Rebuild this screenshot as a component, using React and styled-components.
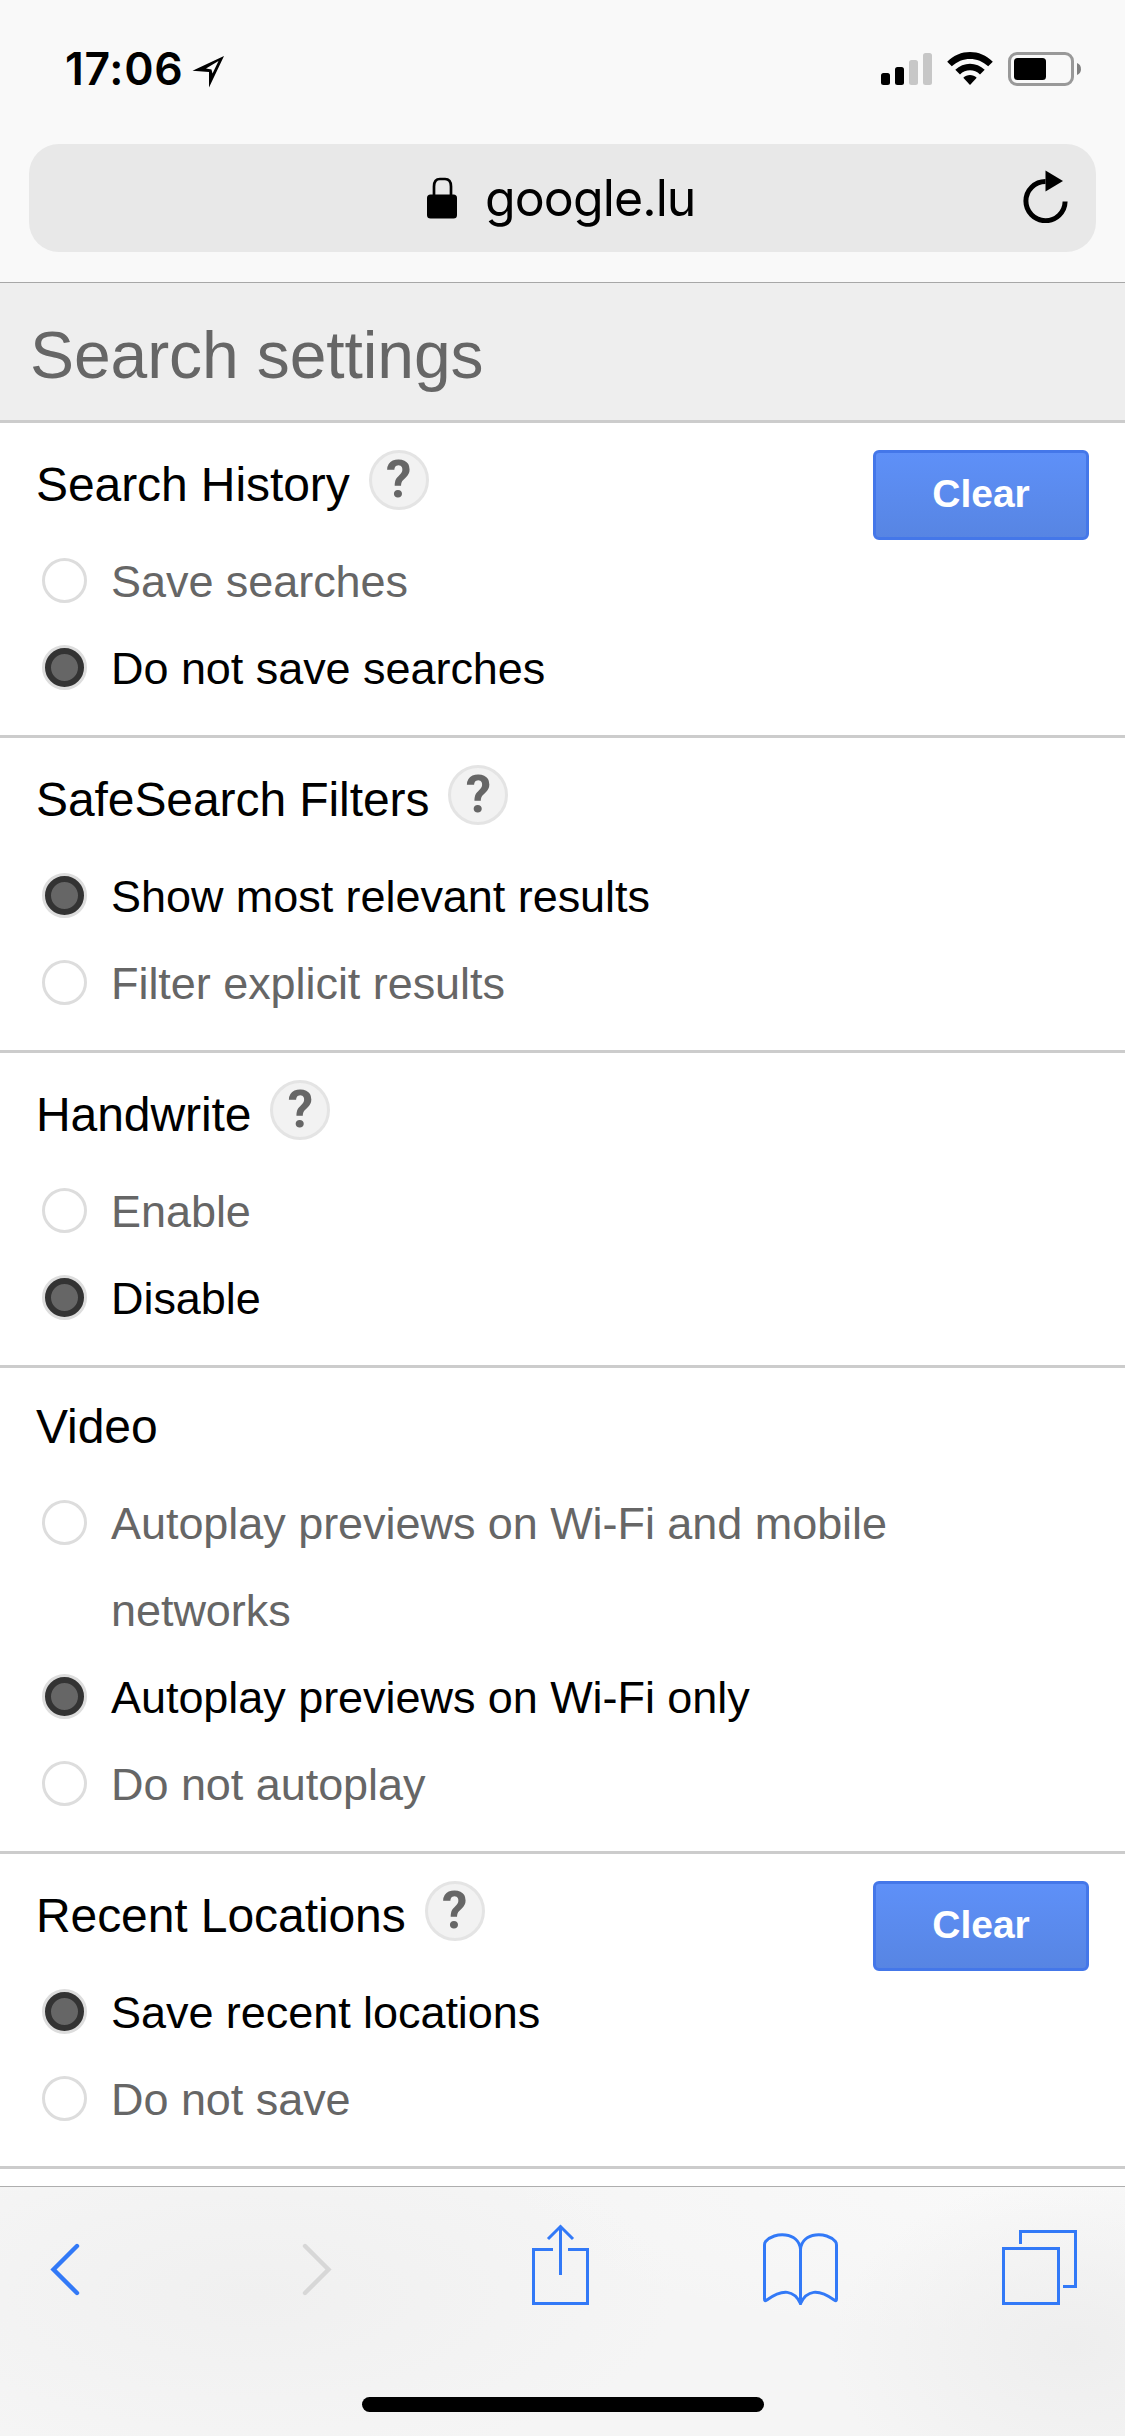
import { useState } from 'react';
import styled, { createGlobalStyle } from 'styled-components';

const SECTIONS = [
  {
    title: 'Search History',
    help: true,
    clearable: true,
    selected: 1,
    options: ['Save searches', 'Do not save searches'],
  },
  {
    title: 'SafeSearch Filters',
    help: true,
    selected: 0,
    options: ['Show most relevant results', 'Filter explicit results'],
  },
  {
    title: 'Handwrite',
    help: true,
    selected: 1,
    options: ['Enable', 'Disable'],
  },
  {
    title: 'Video',
    selected: 1,
    options: [
      'Autoplay previews on Wi-Fi and mobile networks',
      'Autoplay previews on Wi-Fi only',
      'Do not autoplay',
    ],
  },
  {
    title: 'Recent Locations',
    help: true,
    clearable: true,
    selected: 0,
    options: ['Save recent locations', 'Do not save'],
  },
];

const SettingsSection = ({ title, help, clearable, selected, options }) => {
  const [value, setValue] = useState(selected);

  return (
    <Section>
      <SectionBody>
        <Heading $help={help}>
          <Title>{title}</Title>
          {help && <Help>?</Help>}
        </Heading>
        {options.map((label, i) => (
          <Option key={label} $checked={i === value} onClick={() => setValue(i)}>
            <Radio $checked={i === value} />
            <Label>{label}</Label>
          </Option>
        ))}
      </SectionBody>
      {clearable && <ClearButton type='button'>Clear</ClearButton>}
    </Section>
  );
};

const App = () => (
  <Screen>
    <GlobalStyle />
    <StatusBar>
      <Clock>17:06</Clock>
      <LocationIcon />
      <StatusIcons>
        <SignalIcon />
        <WifiIcon />
        <BatteryIcon />
      </StatusIcons>
    </StatusBar>

    <AddressBar>
      <AddressField>
        <LockIcon />
        <Host>google.lu</Host>
        <ReloadIcon />
      </AddressField>
    </AddressBar>

    <Page>
      <PageHeader>Search settings</PageHeader>
      {SECTIONS.map((section) => (
        <SettingsSection key={section.title} {...section} />
      ))}
    </Page>

    <Toolbar>
      <Actions>
        <ChevronIcon color='#3279f7' d='M27 3 3.5 26.5 27 50' />
        <ChevronIcon color='#d7d7d7' d='M3 3 26.5 26.5 3 50' />
        <ShareIcon />
        <BookIcon />
        <TabsIcon />
      </Actions>
      <HomeIndicator />
    </Toolbar>
  </Screen>
);

const LocationIcon = () => (
  <svg width='33' height='33' viewBox='0 0 33 33'>
    <path
      fillRule='evenodd'
      d='M32 1 .5 15.7 17 17v15.5L32 1ZM26.5 6 20.5 18.5 19.5 14.5 14 13.5Z'
    />
  </svg>
);

const SignalIcon = () => (
  <svg width='51' height='34' viewBox='0 0 51 34'>
    <rect x='0' y='21' width='9' height='12' rx='2.5' />
    <rect x='14' y='15' width='9' height='18' rx='2.5' />
    <rect x='28' y='8' width='9' height='25' rx='2.5' fill='#c7c7c7' />
    <rect x='42' y='1' width='9' height='32' rx='2.5' fill='#c7c7c7' />
  </svg>
);

const WifiIcon = () => (
  <svg width='46' height='34' viewBox='0 0 46 34'>
    <path d='M0.2 9.7C13-3.2 33-3.2 45.8 9.7L41.2 14.3C31 4.4 15 4.4 4.8 14.3Z' />
    <path d='M8.3 17.7C16.5 9.7 29.5 9.7 37.7 17.7L33 22.4C27.4 16.9 18.6 16.9 13 22.4Z' />
    <path d='M16.3 25.8C20 22.2 26 22.2 29.7 25.8L23 33Z' />
  </svg>
);

const BatteryIcon = () => (
  <svg width='74' height='34' viewBox='0 0 74 34'>
    <rect x='1.5' y='1.5' width='63' height='31' rx='7.5' fill='none' stroke='#999' strokeWidth='3' />
    <rect x='6' y='6' width='32' height='22' rx='3.5' />
    <path d='M69 11C74.3 12.5 74.3 21.5 69 23Z' fill='#808080' />
  </svg>
);

const LockIcon = () => (
  <svg width='30' height='42' viewBox='0 0 30 42'>
    <path
      d='M7 19V9.5Q7 2 13 2H18Q24 2 24 9.5V19'
      fill='none'
      stroke='#000'
      strokeWidth='2.7'
    />
    <rect y='17.5' width='30' height='24' rx='3.5' />
  </svg>
);

const ReloadSvg = styled.svg`
  margin: 0 0 4px auto;
`;

const ReloadIcon = () => (
  <ReloadSvg width='45' height='54' viewBox='0 0 45 54'>
    <path d='M22.5 12.5A19.6 19.6 0 1 0 42.1 32.5' fill='none' stroke='#000' strokeWidth='5' />
    <path d='M22.500 1.500V22.500L40 12Z' />
  </ReloadSvg>
);

const ChevronIcon = ({ color, d }) => (
  <svg width='30' height='53' viewBox='0 0 30 53'>
    <path d={d} fill='none' stroke={color} strokeWidth='4.4' strokeLinecap='round' />
  </svg>
);

const ShareIcon = () => (
  <svg width='57' height='81' viewBox='0 0 57 81' fill='none' stroke='#3279f7' strokeWidth='3'>
    <path d='M21 25.5H1.5V79.5H55.5V25.5H36' />
    <path d='M28.5 51V2.5' />
    <path d='M16 15 28.5 2.5 41 15' />
  </svg>
);

const BookSvg = styled.svg`
  margin-bottom: -1px;
`;

const BookIcon = () => (
  <BookSvg
    width='75'
    height='73'
    viewBox='0 0 75 73'
    fill='none'
    stroke='#3279f7'
    strokeWidth='3'
    strokeLinejoin='round'
  >
    <path d='M37.5 70.500V16C35.5-1.500 11-1.500 2.600 8.500Q1.500 9.800 1.500 12V66C1.500 68 2 68.200 3.800 67C20 55.500 31 57 37.500 70.500Z' />
    <path d='M37.500 70.500V16C39.500-1.500 64-1.500 72.400 8.500Q73.500 9.800 73.500 12V66C73.500 68 73 68.200 71.200 67C55 55.500 44 57 37.500 70.500Z' />
  </BookSvg>
);

const TabsIcon = () => (
  <svg width='75' height='75' viewBox='0 0 75 75' fill='none' stroke='#3279f7' strokeWidth='3'>
    <rect x='1.5' y='18.5' width='55' height='55' />
    <path d='M18.5 14V1.5H73.5V56.5H61' />
  </svg>
);

const GlobalStyle = createGlobalStyle`
  * {
    box-sizing: border-box;
  }

  body {
    margin: 0;
    background: #fff;
  }

  svg {
    display: block;
    flex-shrink: 0;
  }
`;

const Screen = styled.div`
  display: flex;
  flex-direction: column;
  width: 1125px;
  height: 2436px;
  overflow: hidden;
  color: #000;
  font-family: 'Liberation Sans', Arial, sans-serif;
`;

const StatusBar = styled.header`
  display: flex;
  align-items: flex-start;
  height: 132px;
  padding: 52px 43px 0 65px;
  background: #f9f9f9;

  & > svg {
    margin: 3px 0 0 9px;
  }
`;

const Clock = styled.span`
  width: 118px;
  font-family: Inter, sans-serif;
  font-size: 44.5px;
  font-weight: 600;
  line-height: 34px;
  letter-spacing: 0.7px;
  white-space: nowrap;
`;

const StatusIcons = styled.div`
  display: flex;
  gap: 15px;
  margin-left: auto;
`;

const AddressBar = styled.div`
  height: 151px;
  padding: 12px 29px 0;
  background: #f9f9f9;
  border-bottom: 1px solid #a7a7a7;
`;

const AddressField = styled.div`
  display: flex;
  align-items: center;
  height: 108px;
  padding: 0 28px 0 398px;
  border-radius: 30px;
  background: #e8e8e8;
`;

const Host = styled.span`
  margin-left: 28px;
  font-family: Inter, sans-serif;
  font-size: 50px;
  line-height: 60px;
  letter-spacing: -0.9px;
`;

const Page = styled.main`
  flex: 1;
  min-height: 0;
  overflow: hidden;
  background: #fff;
`;

const PageHeader = styled.h1`
  height: 140px;
  margin: 0;
  padding: 0 30px;
  border-bottom: 3px solid #ccc;
  background: #eee;
  color: #666;
  font-size: 66px;
  font-weight: 400;
  line-height: 144px;
  letter-spacing: -0.1px;
`;

const Section = styled.section`
  display: flex;
  align-items: flex-start;
  justify-content: space-between;
  padding: 27px 36px 23px;
  border-bottom: 3px solid #ccc;
`;

const SectionBody = styled.div`
  flex: 1;
`;

const Heading = styled.div`
  display: flex;
  align-items: flex-start;
  height: ${(props) => (props.$help ? '88px' : '85px')};

  h2 {
    margin-top: ${(props) => (props.$help ? '5px' : '2px')};
  }
`;

const Title = styled.h2`
  margin: 0;
  font-size: 48px;
  font-weight: 400;
  line-height: 60px;
  letter-spacing: -0.08px;
`;

const Help = styled.span`
  width: 60px;
  height: 60px;
  margin-left: 19px;
  border: 3px solid #e4e4e4;
  border-radius: 50%;
  background: #f2f2f2;
  color: #666;
  font-family: Roboto, sans-serif;
  font-size: 51px;
  font-weight: 700;
  line-height: 54px;
  text-align: center;
`;

const Option = styled.div`
  display: flex;
  align-items: flex-start;
  padding-left: 6px;
  color: ${(props) => (props.$checked ? '#000' : '#666')};
`;

const Radio = styled.span`
  display: flex;
  flex-shrink: 0;
  width: 45px;
  height: 45px;
  margin: 20px 24px 0 0;
  border: 3px solid #ddd;
  border-radius: 50%;
  background: ${(props) => (props.$checked ? '#ddd' : '#fff')};

  &::after {
    content: '';
    display: ${(props) => (props.$checked ? 'block' : 'none')};
    flex: 1;
    border: 6px solid #333;
    border-radius: 50%;
    background: #666;
  }
`;

const Label = styled.span`
  max-width: 840px;
  font-size: 45px;
  line-height: 87px;
  letter-spacing: -0.05px;
`;

const ClearButton = styled.button`
  width: 216px;
  height: 90px;
  padding: 0 0 3px;
  border: 3px solid #4477e9;
  border-radius: 6px;
  background: linear-gradient(#5e90f8, #5785e3);
  color: #fff;
  font-family: inherit;
  font-size: 39px;
  font-weight: 700;
`;

const Toolbar = styled.footer`
  display: flex;
  flex-direction: column;
  align-items: center;
  height: 250px;
  padding-top: 37px;
  border-top: 1px solid #aeaeae;
  background:
    radial-gradient(ellipse 240px 170px at 1072px 160px, #eeeeee, rgba(244, 244, 244, 0)),
    radial-gradient(ellipse 420px 170px at 255px 110px, #f0f0f0, rgba(243, 243, 243, 0)),
    radial-gradient(ellipse 500px 150px at 1000px 0, #f9f9f9, rgba(245, 245, 245, 0)),
    #f5f5f5;
`;

const Actions = styled.nav`
  display: grid;
  grid-template-columns: 252px 230px 231px 239px 1fr;
  align-items: end;
  width: 100%;
  height: 81px;
  padding-left: 50px;

  & > svg:nth-child(-n + 2) {
    margin-bottom: 9px;
  }
`;

const HomeIndicator = styled.div`
  width: 402px;
  height: 15px;
  margin-top: 92px;
  border-radius: 8px;
  background: #000;
`;

export default App;
